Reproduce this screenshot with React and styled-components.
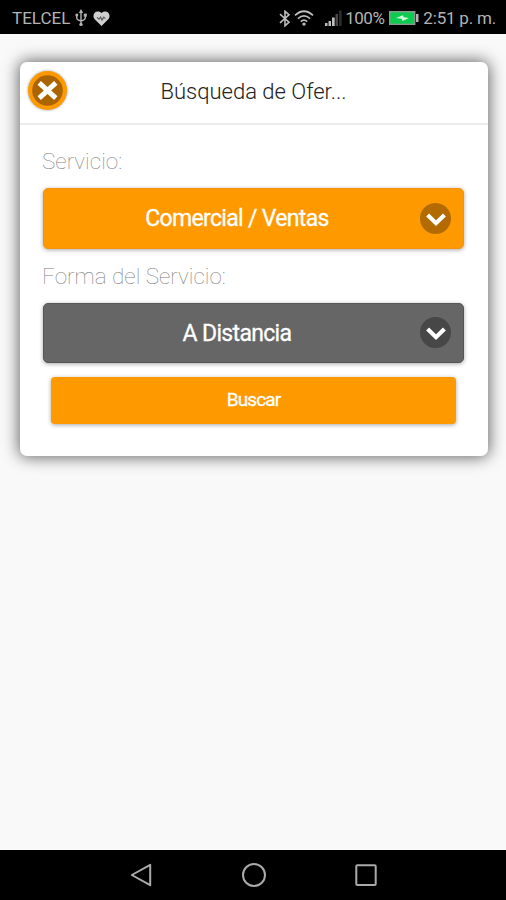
import React from "react";
import styled, { createGlobalStyle } from "styled-components";

const App = () => {
  return (
    <Screen>
      <GlobalStyle />
      <StatusBar>
        <StatusGroup>
          <StatusText $spacing="0px">TELCEL</StatusText>
          <UsbIcon />
          <HeartIcon />
        </StatusGroup>
        <StatusGroup>
          <BluetoothIcon />
          <WifiIcon />
          <SignalIcon />
          <StatusText $spacing="-0.5px">100%</StatusText>
          <BatteryIcon />
          <StatusText $spacing="-0.2px">2:51 p. m.</StatusText>
        </StatusGroup>
      </StatusBar>
      <Content>
        <Card>
          <CardHeader>
            <CloseButton aria-label="Cerrar">
              <CloseIcon />
            </CloseButton>
            <Title>Búsqueda de Ofer...</Title>
          </CardHeader>
          <Form>
            <Label>Servicio:</Label>
            <Select $color="#ff9900" $border="#f7930a" $height={61}>
              <SelectText>Comercial / Ventas</SelectText>
              <Arrow $color="#b36b00">
                <ChevronIcon />
              </Arrow>
            </Select>
            <Label>Forma del Servicio:</Label>
            <Select $color="#666666" $border="#555555" $height={60}>
              <SelectText>A Distancia</SelectText>
              <Arrow $color="#474747" $lift={2}>
                <ChevronIcon />
              </Arrow>
            </Select>
            <SearchButton>Buscar</SearchButton>
          </Form>
        </Card>
      </Content>
      <NavBar>
        <NavIcon>
          <path d="M2.8 12 L21.2 1.8 V22.2 Z" />
        </NavIcon>
        <NavIcon>
          <circle cx="12" cy="12" r="11" />
        </NavIcon>
        <NavIcon>
          <rect x="2.3" y="2.3" width="19.4" height="19.6" rx="1" />
        </NavIcon>
      </NavBar>
    </Screen>
  );
};

export default App;

const UsbIcon = () => (
  <StatusIcon width="12" height="18" viewBox="0 0 12 18" $left={5}>
    <g fill="none" stroke="#b4b4b4" strokeWidth="1.4">
      <path d="M6 2.5V15M1.7 6V8.5Q1.7 11 6 12M10.3 6V8.5Q10.3 11 6 12" />
    </g>
    <path d="M6 0L8.2 4H3.8Z" fill="#b4b4b4" />
    <circle cx="6" cy="15.4" r="1.7" fill="#b4b4b4" />
    <circle cx="1.8" cy="6" r="1.5" fill="#b4b4b4" />
    <rect x="8.8" y="4.6" width="3" height="3" fill="#b4b4b4" />
  </StatusIcon>
);

const HeartIcon = () => (
  <StatusIcon width="17" height="15" viewBox="0 0 17 15" $left={6}>
    <path
      d="M8.5 15L2 8.6C-2.2 4 3-2.6 8.5 2C14-2.6 19.2 4 15 8.6Z"
      fill="#cfcfcf"
    />
    <path
      d="M4 6.4L6 8.2L7.6 6L9 9L10.8 6.2L12.4 7.6"
      fill="none"
      stroke="#555"
      strokeWidth="1.1"
    />
  </StatusIcon>
);

const BluetoothIcon = () => (
  <StatusIcon width="12" height="17" viewBox="0 0 12 17">
    <path
      d="M1 4.2L10 12.2L6 15.8V1.2L10 4.8L1 12.8"
      fill="none"
      stroke="#bdbdbd"
      strokeWidth="1.6"
    />
  </StatusIcon>
);

const WifiIcon = () => (
  <StatusIcon width="20" height="16" viewBox="0 0 20 16" $left={3}>
    <g fill="none" stroke="#bdbdbd" strokeWidth="1.7">
      <path d="M1 5.3Q10-2.8 19 5.3M4 8.6Q10 3.2 16 8.6M6.8 11.6Q10 8.8 13.2 11.6" />
    </g>
    <circle cx="10" cy="14.1" r="1.7" fill="#bdbdbd" />
  </StatusIcon>
);

const SignalIcon = () => (
  <StatusIcon width="17" height="16" viewBox="0 0 17 16" $left={11} $right={3}>
    <path
      d="M0 13h2.5v3H0zM3.5 11h2.5v5H3.5zM7 7.5h2.7V16H7z"
      fill="#bdbdbd"
    />
    <path d="M10.5 4h2.5v12h-2.5z" fill="#484848" />
    <path d="M14 .5h2.7V16H14z" fill="#2c2c2c" />
  </StatusIcon>
);

const BatteryIcon = () => (
  <StatusIcon width="30" height="14" viewBox="0 0 30 14" $left={5} $right={4}>
    <rect x=".7" y=".7" width="25" height="12.6" fill="#0ccc50" stroke="#8a9a8e" strokeWidth="1.4" />
    <rect x="27" y="3" width="2.5" height="8" fill="#b4b4b4" />
    <path d="M7 7L14 4.2L14.6 6.2L20 7L13.5 10L12.8 7.8Z" fill="#d8ffe2" />
  </StatusIcon>
);

const CloseIcon = () => (
  <svg width="31" height="31" viewBox="0 0 31 31">
    <circle cx="15.5" cy="15.5" r="15.3" fill="#aa6500" />
    <path d="M7.2 7.9L23.8 23.1M23.8 7.9L7.2 23.1" stroke="#fff" strokeWidth="5" />
  </svg>
);

const ChevronIcon = () => (
  <svg width="20" height="14" viewBox="0 0 20 14">
    <path
      d="M1.6 2.1L10 10.2L18.4 2.1"
      fill="none"
      stroke="#fff"
      strokeWidth="4.2"
    />
  </svg>
);

const GlobalStyle = createGlobalStyle`
  * {
    box-sizing: border-box;
  }

  body {
    margin: 0;
    font-family: Roboto, "Liberation Sans", sans-serif;
  }

  button {
    font-family: inherit;
    border: none;
    padding: 0;
  }
`;

const Screen = styled.div`
  display: flex;
  flex-direction: column;
  height: 900px;
  background-color: #f9f9f9;
  overflow: hidden;
`;

const StatusBar = styled.div`
  display: flex;
  justify-content: space-between;
  align-items: center;
  height: 34px;
  padding: 2px 10px 0 12px;
  background-color: #000;
`;

const StatusGroup = styled.div`
  display: flex;
  align-items: center;
`;

const StatusText = styled.span`
  color: #b4b4b4;
  font-size: 17px;
  letter-spacing: ${(props) => props.$spacing};
  line-height: 20px;
  white-space: nowrap;
`;

const StatusIcon = styled.svg`
  flex: none;
  margin-left: ${(props) => props.$left || 0}px;
  margin-right: ${(props) => props.$right || 0}px;
`;

const Content = styled.div`
  flex: 1;
  padding: 28px 18px 0 20px;
  overflow: hidden;
`;

const Card = styled.div`
  height: 393.5px;
  background-color: #fff;
  border-radius: 7px;
  box-shadow: 0 0 16px 1px rgba(0, 0, 0, 0.62);
`;

const CardHeader = styled.div`
  display: flex;
  align-items: center;
  height: 63px;
  padding: 0 8px 4px;
  border-bottom: 2px solid #ececec;
`;

const CloseButton = styled.button`
  display: flex;
  align-items: center;
  justify-content: center;
  width: 39px;
  height: 39px;
  border-radius: 50%;
  background-color: #ff9900;
  box-shadow: 0 0 3px rgba(0, 0, 0, 0.4);
`;

const Title = styled.div`
  flex: 1;
  padding-top: 2px;
  margin-right: 40px;
  color: #222;
  font-size: 22px;
  font-weight: 300;
  text-align: center;
`;

const Form = styled.div`
  display: flex;
  flex-direction: column;
  padding: 22px 24px 0 23px;
`;

const Label = styled.div`
  height: 30px;
  margin: 0 0 11px -1px;
  color: #808080;
  font-size: 22.5px;
  font-weight: 100;
  line-height: 28px;
`;

const Select = styled.div`
  display: flex;
  align-items: center;
  height: ${(props) => props.$height}px;
  margin-bottom: 13px;
  padding: 0 12px 0 10px;
  border: 1px solid ${(props) => props.$border};
  border-radius: 5px;
  background-color: ${(props) => props.$color};
  box-shadow: 0 1px 4px rgba(0, 0, 0, 0.35);
`;

const SelectText = styled.div`
  flex: 1;
  color: #fff;
  font-size: 23px;
  letter-spacing: -0.67px;
  text-align: center;
  -webkit-text-stroke: 0.3px #fff;
`;

const Arrow = styled.div`
  display: flex;
  align-items: center;
  justify-content: center;
  width: 31px;
  height: 31px;
  margin-bottom: ${(props) => props.$lift || 0}px;
  padding-top: 3px;
  border-radius: 50%;
  background-color: ${(props) => props.$color};
`;

const SearchButton = styled.button`
  height: 47px;
  margin: 0.5px 8px 0;
  padding-bottom: 2px;
  border-radius: 4px;
  background-color: #ff9900;
  box-shadow: 0 1px 4px rgba(0, 0, 0, 0.35);
  color: #fff;
  font-size: 19px;
  letter-spacing: -0.9px;
  -webkit-text-stroke: 0.3px #fff;
`;

const NavBar = styled.div`
  display: flex;
  align-items: center;
  justify-content: center;
  gap: 88.5px;
  height: 50px;
  padding-left: 1px;
  background-color: #000;
`;

const NavIcon = styled.svg.attrs({ viewBox: "0 0 24 24" })`
  width: 24px;
  height: 24px;
  fill: none;
  stroke: #aaa;
  stroke-width: 2;
  stroke-linejoin: round;
`;
